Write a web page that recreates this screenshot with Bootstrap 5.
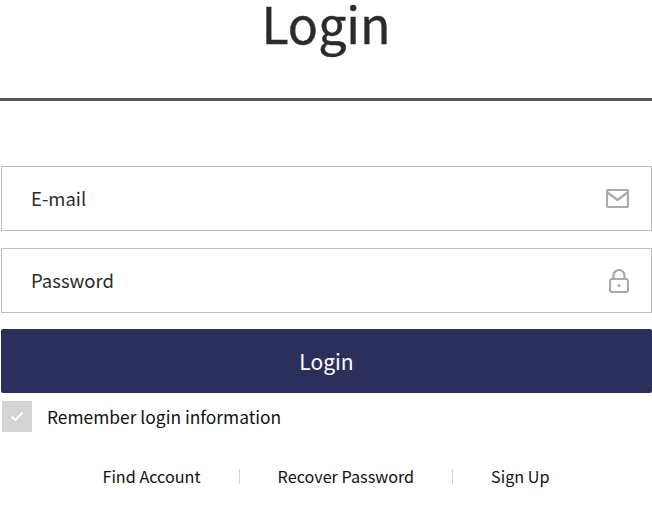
<!DOCTYPE html>
<html lang="en">
<head>
    <meta charset="UTF-8">
    <meta name="viewport" content="width=device-width, initial-scale=1.0">
    <title>Login</title>
    <link href="https://cdn.jsdelivr.net/npm/bootstrap@5.3.0/dist/css/bootstrap.min.css" rel="stylesheet">
    <style>
        body { font-family: "Noto Sans CJK KR", "Noto Sans", sans-serif; color: #222; background: #fff; overflow: hidden; }
        .login-head { height: 101px; border-bottom: 3px solid #555; margin-bottom: 65px; }
        .login-head h1 { font-size: 50px; font-weight: 400; line-height: 44px; margin: 0; color: #2b2b2b; -webkit-text-stroke: 0.4px #2b2b2b; }
        .login-form { padding: 0 0 0 1px; }
        .field-box { height: 65px; border: 1px solid #bdbdbd; margin-bottom: 17px; padding: 0 22px 0 29px; }
        .field-box input { border: 0; outline: 0; padding: 0; width: 100%; font-size: 18.5px; color: #222; background: transparent; }
        .field-box input::placeholder { color: #2b2b2b; opacity: 1; }
        .login-btn { display: block; height: 64px; width: 100%; margin-top: -1px; padding-top: 8px; background: #2c2f5b; border: 0; border-radius: 2px; color: #fff; font-size: 21px; }
        .login-btn:hover { background: #2c2f5b; color: #fff; }
        .remember-row { margin-top: 8px; gap: 15px; font-size: 17.4px; color: #111; }
        .remember-box { width: 30px; height: 31px; margin-left: 1px; background: #d4d4d4; }
        .remember-text { padding-top: 2px; }
        .links-row { margin-top: 32px; font-size: 16.2px; color: #111; padding-right: 1px; }
        .links-row a { color: #111; text-decoration: none; }
        .link-sep { width: 1px; height: 15px; background: #d4d4d4; margin: 0 38px; }
    </style>
</head>
<body>
    <div class="login-head text-center">
        <h1>Login</h1>
    </div>
    <form class="login-form">
        <div class="field-box d-flex align-items-center">
            <input type="text" placeholder="E-mail">
            <svg width="23" height="19" viewBox="0 0 23 19" fill="none" stroke="#aaa" stroke-width="2.2" class="flex-shrink-0">
                <rect x="1" y="1" width="21" height="17" rx="1.5"/>
                <path d="M1.5 3.5 11.5 11 21.5 3.5"/>
            </svg>
        </div>
        <div class="field-box d-flex align-items-center">
            <input type="password" placeholder="Password">
            <svg width="20" height="24" viewBox="0 0 20 24" fill="none" stroke="#aaa" stroke-width="2.2" class="flex-shrink-0">
                <rect x="1" y="10" width="18" height="13" rx="2"/>
                <path d="M4.5 10V6.5a5.5 5.5 0 0 1 11 0V10"/>
                <circle cx="10" cy="16.5" r="1.5" fill="#aaa" stroke="none"/>
            </svg>
        </div>
        <button type="button" class="btn login-btn">Login</button>
        <div class="remember-row d-flex align-items-center">
            <span class="remember-box d-flex align-items-center justify-content-center">
                <svg width="14" height="11" viewBox="0 0 14 11" fill="none" stroke="#fff" stroke-width="2">
                    <path d="M1.5 5.5 5.5 9 12.5 1.5"/>
                </svg>
            </span>
            <span class="remember-text">Remember login information</span>
        </div>
        <div class="links-row d-flex justify-content-center align-items-center">
            <a href="#">Find Account</a>
            <span class="link-sep"></span>
            <a href="#">Recover Password</a>
            <span class="link-sep"></span>
            <a href="#">Sign Up</a>
        </div>
    </form>
    <script src="https://cdn.jsdelivr.net/npm/bootstrap@5.3.0/dist/js/bootstrap.bundle.min.js"></script>
</body>
</html>
